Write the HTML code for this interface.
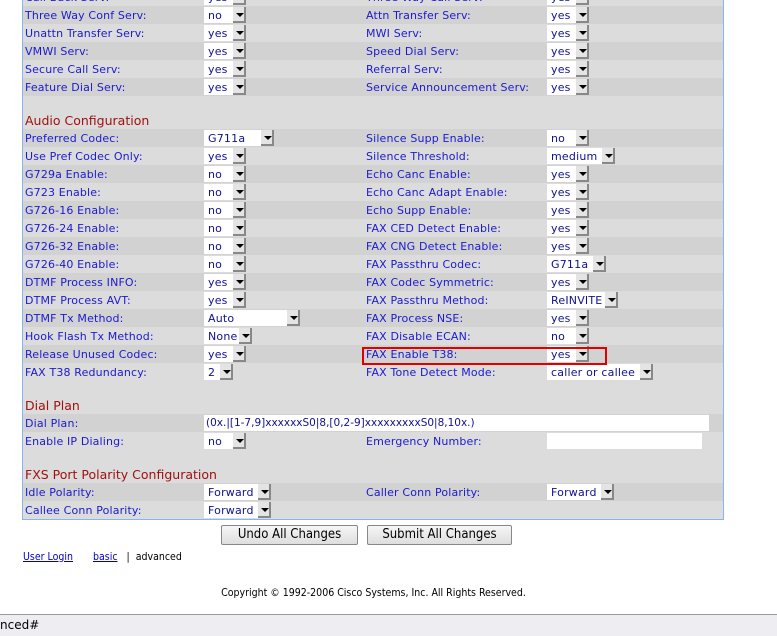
<!DOCTYPE html>
<html><head><meta charset="utf-8"><style>
*{margin:0;padding:0;box-sizing:border-box}
body{width:777px;height:636px;background:#fff;position:relative;overflow:hidden;font-family:"DejaVu Sans","Liberation Sans",sans-serif;font-size:11px}
#p{position:absolute;left:22px;top:-10px;width:702px;height:530px;background:#dcdcdc;border-left:1px solid #8ab4f0;border-right:1px solid #8ab4f0;border-bottom:1px solid #8ab4f0}
.r{position:absolute;left:23px;width:700px;height:18px}
.d{background:#d2d2d2}
.l{position:absolute;top:3px;color:#1a1ad0;white-space:nowrap;line-height:14px;letter-spacing:0.15px}
.h{position:absolute;left:25px;color:#a01010;font-size:12.5px;white-space:nowrap}
.s{position:absolute;top:1px;height:16px;background:#fff;color:#101090;padding-left:4px;line-height:17px;white-space:nowrap;letter-spacing:0.2px}
.s i{position:absolute;right:0;top:0;width:13px;height:16px;background:#e4e4e4;border-right:2px solid #888;border-bottom:2px solid #888}
.s i:after{content:"";position:absolute;left:3px;top:6px;border-left:4px solid transparent;border-right:4px solid transparent;border-top:4px solid #000}
.in{position:absolute;top:1px;height:16px;background:#fff;color:#101090;padding-left:2px;line-height:17px;white-space:nowrap;font-size:10.5px}
.btn{position:absolute;top:525px;height:20px;border:1px solid #888;border-radius:2px;background:linear-gradient(#f6f6f6,#dedede);font-size:13px;text-align:center;line-height:18px;font-family:"DejaVu Sans Condensed","DejaVu Sans",sans-serif}
</style></head><body>
<div id="p"></div>

<div class="r" style="top:-12px"><span class="l" style="left:2px">Call Back Serv:</span><span class="s" style="left:181px;width:42px">yes<i></i></span><span class="l" style="left:343px">Three Way Call Serv:</span><span class="s" style="left:524px;width:42px">yes<i></i></span></div>
<div class="r d" style="top:6px"><span class="l" style="left:2px">Three Way Conf Serv:</span><span class="s" style="left:181px;width:42px">no<i></i></span><span class="l" style="left:343px">Attn Transfer Serv:</span><span class="s" style="left:524px;width:42px">yes<i></i></span></div>
<div class="r" style="top:24px"><span class="l" style="left:2px">Unattn Transfer Serv:</span><span class="s" style="left:181px;width:42px">yes<i></i></span><span class="l" style="left:343px">MWI Serv:</span><span class="s" style="left:524px;width:42px">yes<i></i></span></div>
<div class="r d" style="top:42px"><span class="l" style="left:2px">VMWI Serv:</span><span class="s" style="left:181px;width:42px">yes<i></i></span><span class="l" style="left:343px">Speed Dial Serv:</span><span class="s" style="left:524px;width:42px">yes<i></i></span></div>
<div class="r" style="top:60px"><span class="l" style="left:2px">Secure Call Serv:</span><span class="s" style="left:181px;width:42px">yes<i></i></span><span class="l" style="left:343px">Referral Serv:</span><span class="s" style="left:524px;width:42px">yes<i></i></span></div>
<div class="r d" style="top:78px"><span class="l" style="left:2px">Feature Dial Serv:</span><span class="s" style="left:181px;width:42px">yes<i></i></span><span class="l" style="left:343px">Service Announcement Serv:</span><span class="s" style="left:524px;width:42px">yes<i></i></span></div>

<div class="h" style="top:113px">Audio Configuration</div>
<div class="r d" style="top:129px"><span class="l" style="left:2px">Preferred Codec:</span><span class="s" style="left:181px;width:70px">G711a<i></i></span><span class="l" style="left:343px">Silence Supp Enable:</span><span class="s" style="left:524px;width:42px">no<i></i></span></div>
<div class="r" style="top:147px"><span class="l" style="left:2px">Use Pref Codec Only:</span><span class="s" style="left:181px;width:42px">yes<i></i></span><span class="l" style="left:343px">Silence Threshold:</span><span class="s" style="left:524px;width:68px">medium<i></i></span></div>
<div class="r d" style="top:165px"><span class="l" style="left:2px">G729a Enable:</span><span class="s" style="left:181px;width:42px">no<i></i></span><span class="l" style="left:343px">Echo Canc Enable:</span><span class="s" style="left:524px;width:42px">yes<i></i></span></div>
<div class="r" style="top:183px"><span class="l" style="left:2px">G723 Enable:</span><span class="s" style="left:181px;width:42px">no<i></i></span><span class="l" style="left:343px">Echo Canc Adapt Enable:</span><span class="s" style="left:524px;width:42px">yes<i></i></span></div>
<div class="r d" style="top:201px"><span class="l" style="left:2px">G726-16 Enable:</span><span class="s" style="left:181px;width:42px">no<i></i></span><span class="l" style="left:343px">Echo Supp Enable:</span><span class="s" style="left:524px;width:42px">yes<i></i></span></div>
<div class="r" style="top:219px"><span class="l" style="left:2px">G726-24 Enable:</span><span class="s" style="left:181px;width:42px">no<i></i></span><span class="l" style="left:343px">FAX CED Detect Enable:</span><span class="s" style="left:524px;width:42px">yes<i></i></span></div>
<div class="r d" style="top:237px"><span class="l" style="left:2px">G726-32 Enable:</span><span class="s" style="left:181px;width:42px">no<i></i></span><span class="l" style="left:343px">FAX CNG Detect Enable:</span><span class="s" style="left:524px;width:42px">yes<i></i></span></div>
<div class="r" style="top:255px"><span class="l" style="left:2px">G726-40 Enable:</span><span class="s" style="left:181px;width:42px">no<i></i></span><span class="l" style="left:343px">FAX Passthru Codec:</span><span class="s" style="left:524px;width:59px">G711a<i></i></span></div>
<div class="r d" style="top:273px"><span class="l" style="left:2px">DTMF Process INFO:</span><span class="s" style="left:181px;width:42px">yes<i></i></span><span class="l" style="left:343px">FAX Codec Symmetric:</span><span class="s" style="left:524px;width:42px">yes<i></i></span></div>
<div class="r" style="top:291px"><span class="l" style="left:2px">DTMF Process AVT:</span><span class="s" style="left:181px;width:42px">yes<i></i></span><span class="l" style="left:343px">FAX Passthru Method:</span><span class="s" style="left:524px;width:71px">ReINVITE<i></i></span></div>
<div class="r d" style="top:309px"><span class="l" style="left:2px">DTMF Tx Method:</span><span class="s" style="left:181px;width:96px">Auto<i></i></span><span class="l" style="left:343px">FAX Process NSE:</span><span class="s" style="left:524px;width:42px">yes<i></i></span></div>
<div class="r" style="top:327px"><span class="l" style="left:2px">Hook Flash Tx Method:</span><span class="s" style="left:181px;width:48px">None<i></i></span><span class="l" style="left:343px">FAX Disable ECAN:</span><span class="s" style="left:524px;width:42px">no<i></i></span></div>
<div class="r d" style="top:345px"><span class="l" style="left:2px">Release Unused Codec:</span><span class="s" style="left:181px;width:42px">yes<i></i></span><span class="l" style="left:343px">FAX Enable T38:</span><span class="s" style="left:524px;width:42px">yes<i></i></span></div>
<div class="r" style="top:363px"><span class="l" style="left:2px">FAX T38 Redundancy:</span><span class="s" style="left:181px;width:29px">2<i></i></span><span class="l" style="left:343px">FAX Tone Detect Mode:</span><span class="s" style="left:524px;width:106px">caller or callee<i></i></span></div>

<div class="h" style="top:398px">Dial Plan</div>
<div class="r d" style="top:414px"><span class="l" style="left:2px">Dial Plan:</span><span class="in" style="left:181px;width:505px">(0x.|[1-7,9]xxxxxxS0|8,[0,2-9]xxxxxxxxxS0|8,10x.)</span></div>
<div class="r" style="top:432px"><span class="l" style="left:2px">Enable IP Dialing:</span><span class="s" style="left:181px;width:42px">no<i></i></span><span class="l" style="left:343px">Emergency Number:</span><span class="in" style="left:524px;width:155px"></span></div>

<div class="h" style="top:467px">FXS Port Polarity Configuration</div>
<div class="r d" style="top:483px"><span class="l" style="left:2px">Idle Polarity:</span><span class="s" style="left:181px;width:67px">Forward<i></i></span><span class="l" style="left:343px">Caller Conn Polarity:</span><span class="s" style="left:524px;width:67px">Forward<i></i></span></div>
<div class="r" style="top:501px"><span class="l" style="left:2px">Callee Conn Polarity:</span><span class="s" style="left:181px;width:67px">Forward<i></i></span></div>

<div style="position:absolute;left:362px;top:347px;width:245px;height:18px;border:2px solid #e00000"></div>

<div class="btn" style="left:221px;width:137px">Undo All Changes</div>
<div class="btn" style="left:367px;width:145px">Submit All Changes</div>

<div style="position:absolute;top:551px;left:23px;font-size:10.5px;font-family:'DejaVu Sans Condensed','DejaVu Sans',sans-serif;white-space:nowrap"><span style="color:#0000cc;text-decoration:underline">User Login</span><span style="display:inline-block;width:20px"></span><span style="color:#0000cc;text-decoration:underline">basic</span>&nbsp;&nbsp; | &nbsp;advanced</div>
<div style="position:absolute;top:587px;left:0;width:747px;text-align:center;font-size:10.5px;font-family:'DejaVu Sans Condensed','DejaVu Sans',sans-serif">Copyright © 1992-2006 Cisco Systems, Inc. All Rights Reserved.</div>

<div style="position:absolute;left:0;top:614px;width:777px;height:22px;background:#eeeef2;border-top:1px solid #999;font-size:12px;line-height:21px;white-space:nowrap">nced#</div>
</body></html>
